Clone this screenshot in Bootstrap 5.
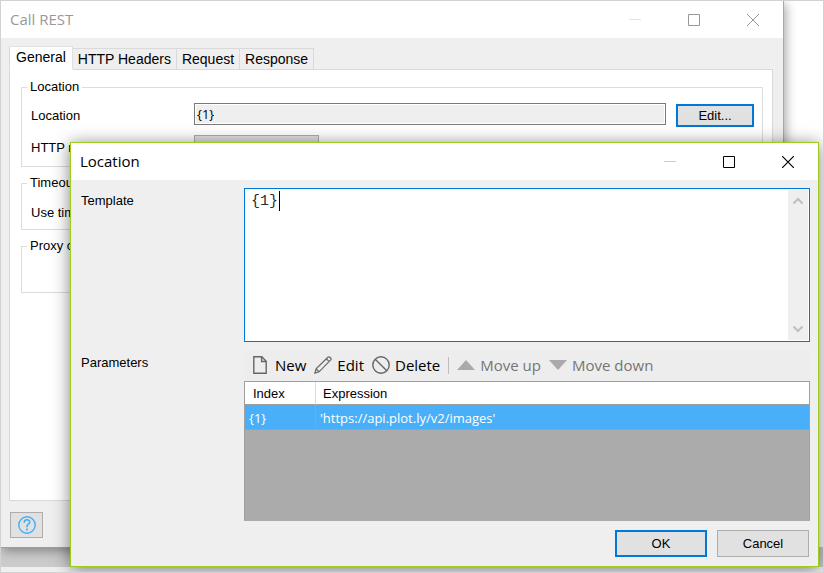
<!DOCTYPE html>
<html lang="en">
<head>
<meta charset="utf-8">
<meta name="viewport" content="width=device-width, initial-scale=1">
<title>Call REST</title>
<link href="https://cdn.jsdelivr.net/npm/bootstrap@5.3.0/dist/css/bootstrap.min.css" rel="stylesheet">
<style>
body { font: 13px/16px "Liberation Sans", Arial, sans-serif; color: #000; background: #fff; }
.desk { min-height: 100vh; border: 1px solid #d2d2d2; background: linear-gradient(to top, #efefef 5px, #cbcbcb 5px, #cbcbcb 25px, #fff 25px); }
.win { background: #efefef; }
.win-rest { inset: 0 39px 24px 0; border-right: 1px solid #a8a8a8; border-bottom: 1px solid #9d9d9d; box-shadow: 2px 3px 10px rgba(0,0,0,.35); }
.win-loc { inset: 141px 4px 5px 69px; border: 1px solid #9acd1e; box-shadow: 0 2px 16px rgba(0,0,0,.5); }
.titlebar { height: 37px; background: #fff; font: 15px/20px "Open Sans", "Noto Sans", sans-serif; padding: 0 24px 2px 9px; }
.titlebar h1 { font: inherit; margin: 0; }
.inactive { color: #999; }
.titlebar button { color: inherit; width: 12px; height: 12px; margin-top: 2px; }
.sys { gap: 47px; }
.plain { border: 0; background: none; padding: 0; }
svg { display: block; }
.rest-body { padding: 8px 10px 9px 8px; }
.win-tabs { font-size: 14px; border: 0; margin-bottom: -1px; position: relative; }
.win-tabs .nav-link { color: #000; border: 1px solid #d9d9d9; border-left: 0; border-radius: 0; margin: 0; padding: 2px 5px; line-height: 16px; background: #efefef; height: 22px; }
.win-tabs .nav-link.active { color: #000; background: #fff; border-left: 1px solid #d9d9d9; border-bottom-color: #fff; height: 24px; padding: 2px 6px 4px; }
.pane { background: #fff; border: 1px solid #d9d9d9; padding: 9px 9px 0 11px; margin-bottom: 11px; }
.group { border: 1px solid #dcdcdc; padding: 0 8px 0 9px; margin-bottom: 8px; }
.group legend { float: none; width: auto; font: inherit; margin: 0 0 0 -4px; padding: 0 3px; }
.group-tall { height: 88px; }
.group-short { height: 55px; }
.label-col { flex: 0 0 163px; padding-top: 5px; }
.use-timeout { padding-top: 14px; }
.field { height: 22px; border: 1px solid #7a7a7a; background: #efefef; padding: 0 2px; font: 13px/16px "Open Sans", "Noto Sans", sans-serif; box-shadow: inset 0 0 0 1px #fff; min-width: 0; }
.combo { width: 125px; height: 22px; border: 1px solid #adadad; background: #e1e1e1; font: inherit; }
.btn-win { border: 1px solid #adadad; border-radius: 0; background: #e1e1e1; color: #000; font: 13px/16px "Liberation Sans", Arial, sans-serif; padding: 0; height: 27px; width: 92px; }
.btn-focus { border: 2px solid #0078d7; }
.btn-edit { width: 78px; height: 23px; margin: 1px 0 0 10px; }
.btn-help { width: 33px; height: 26px; margin-left: 1px; color: #45adf5; }
.loc-body { padding: 8px 8px 9px 10px; }
.editor { height: 154px; border: 1px solid #0078d7; background: #fff; padding: 1px; }
.editor textarea { border: 0; outline: 0; resize: none; padding: 2px 5px; font: 15px/20px "Liberation Mono", monospace; color: #2b2b2b; overflow: hidden; }
.caret { left: 34px; top: 2px; width: 1px; height: 20px; background: #000; }
.scroll { width: 20px; background: #efefef; padding: 7px 0; }
.tools { height: 31px; background: #ededed; font: 15px/20px "Open Sans", "Noto Sans", sans-serif; padding: 0 0 1px 9px; }
.tool { gap: 5px; }
.off { color: #757575; }
.sep { width: 1px; height: 17px; background: #bdbdbd; }
.grid-area { background: #ababab; border-top: 1px solid #a0a0a0; border-left: 1px solid #a0a0a0; border-right: 1px solid #a0a0a0; }
.params { border-collapse: separate; border-spacing: 0; width: 100%; table-layout: fixed; }
.params th { height: 23px; font-weight: 400; background: #fff; padding: 1px 7px 0 8px; border-bottom: 1px solid #a0a0a0; }
.params th + th { border-left: 1px solid #dcdcdc; padding-left: 7px; }
.params td { height: 25px; background: #48aff8; color: #fff; padding: 2px 4px 0; border-bottom: 1px solid #a0a0a0; font: 13px/16px "Open Sans", "Noto Sans", sans-serif; }
.params td + td { border-left: 1px solid #9aa0a4; }
.params .col-index { width: 70px; }
.actions { gap: 10px; padding: 9px 1px 0 0; }
</style>
<script src="https://cdn.jsdelivr.net/npm/bootstrap@5.3.0/dist/js/bootstrap.bundle.min.js"></script>
</head>
<body>
<div class="desk position-relative overflow-hidden">

  <section class="win win-rest position-absolute d-flex flex-column" aria-label="Call REST">
    <header class="titlebar inactive d-flex align-items-center justify-content-between">
      <h1>Call REST</h1>
      <div class="sys d-flex">
        <button type="button" class="plain" aria-label="Minimize" disabled><svg width="12" height="12"><path d="M0 5.5h12" stroke="#e2e2e2"/></svg></button>
        <button type="button" class="plain" aria-label="Maximize"><svg width="12" height="12"><path d="M.5.5h11v11H.5z" fill="none" stroke="currentColor"/></svg></button>
        <button type="button" class="plain" aria-label="Close"><svg width="12" height="12"><path d="M0 0l12 12M12 0L0 12" stroke="currentColor"/></svg></button>
      </div>
    </header>
    <div class="rest-body flex-fill d-flex flex-column">
      <div class="nav nav-tabs win-tabs align-items-end" role="tablist">
        <button type="button" class="nav-link active" role="tab" aria-selected="true">General</button>
        <button type="button" class="nav-link" role="tab">HTTP Headers</button>
        <button type="button" class="nav-link" role="tab">Request</button>
        <button type="button" class="nav-link" role="tab">Response</button>
      </div>
      <div class="pane flex-fill" role="tabpanel">
        <fieldset class="group group-tall">
          <legend>Location</legend>
          <div class="d-flex align-items-start pt-2">
            <label class="label-col" for="location">Location</label>
            <input class="field flex-fill rounded-0" id="location" value="{1}" readonly>
            <button type="button" class="btn btn-win btn-focus btn-edit">Edit...</button>
          </div>
          <div class="d-flex align-items-start pt-2">
            <label class="label-col" for="method">HTTP method</label>
            <select class="combo" id="method" disabled><option></option></select>
          </div>
        </fieldset>
        <fieldset class="group group-short">
          <legend>Timeout</legend>
          <label class="use-timeout" for="timeout">Use timeout</label>
          <input type="checkbox" id="timeout">
        </fieldset>
        <fieldset class="group group-short">
          <legend>Proxy configuration</legend>
        </fieldset>
      </div>
      <button type="button" class="btn btn-win btn-help d-flex align-items-center justify-content-center" aria-label="Help">
        <svg width="18" height="18" viewBox="0 0 18 18" fill="none" stroke="currentColor" stroke-width="1.4"><circle cx="9" cy="9" r="8.2"/><path d="M6.3 6.8V6a2.7 2.4 0 0 1 5.4.3c0 1.8-2.7 2-2.7 4.1v.9" stroke-width="1.6"/><path d="M8.1 13.5h1.8" stroke-width="1.9"/></svg>
      </button>
    </div>
  </section>

  <section class="win win-loc position-absolute d-flex flex-column" role="dialog" aria-label="Location">
    <header class="titlebar d-flex align-items-center justify-content-between">
      <h1>Location</h1>
      <div class="sys d-flex">
        <button type="button" class="plain" aria-label="Minimize" disabled><svg width="12" height="12"><path d="M0 5.5h12" stroke="#ccc"/></svg></button>
        <button type="button" class="plain" aria-label="Maximize"><svg width="12" height="12"><path d="M.5.5h11v11H.5z" fill="none" stroke="#000"/></svg></button>
        <button type="button" class="plain" aria-label="Close"><svg width="12" height="12"><path d="M0 0l12 12M12 0L0 12" stroke="#000" stroke-width="1.2"/></svg></button>
      </div>
    </header>
    <div class="loc-body flex-fill d-flex flex-column">
      <div class="d-flex">
        <label class="label-col" for="template">Template</label>
        <div class="editor flex-fill d-flex position-relative">
          <textarea class="flex-fill" id="template" spellcheck="false">{1}</textarea>
          <span class="caret position-absolute"></span>
          <div class="scroll d-flex flex-column justify-content-between align-items-center" aria-hidden="true">
            <svg width="10" height="8" fill="none" stroke="#bfbfbf" stroke-width="2"><path d="M.5 6.500L5 2l4.500 4.500"/></svg>
            <svg width="10" height="8" fill="none" stroke="#bfbfbf" stroke-width="2"><path d="M.5 1.500L5 6l4.500-4.500"/></svg>
          </div>
        </div>
      </div>
      <div class="d-flex flex-fill pt-2">
        <div class="label-col" id="params-label">Parameters</div>
        <div class="flex-fill d-flex flex-column">
          <div class="tools d-flex align-items-center gap-2" role="toolbar" aria-label="Parameters">
            <button type="button" class="plain d-flex align-items-center gap-2"><svg width="14" height="18" fill="none" stroke="#666" stroke-width="1.4"><path d="M.8.8h8l4.400 4.500v11.900H.8zM8.600.8v4.700h4.600"/></svg>New</button>
            <button type="button" class="plain tool d-flex align-items-center"><svg width="18" height="18" fill="none" stroke="#666" stroke-width="1.200"><path d="M.9 17.100l1.200-4.200L13.900 1.200c1.300-1.300 4.100 1.200 2.800 2.700L5.100 15.800zM2.100 12.900l3 2.900M12.300 2.800l2.900 2.800"/></svg>Edit</button>
            <button type="button" class="plain tool d-flex align-items-center"><svg width="18" height="18" fill="none" stroke="#666" stroke-width="1.400"><circle cx="9" cy="9" r="8.200"/><path d="M3.200 3.200l11.600 11.600"/></svg>Delete</button>
            <span class="sep"></span>
            <button type="button" class="plain tool off d-flex align-items-center"><svg width="18" height="10"><path d="M0 10L9 0l9 10z" fill="#aaa"/></svg>Move up</button>
            <button type="button" class="plain tool off d-flex align-items-center"><svg width="18" height="10"><path d="M0 0h18L9 10z" fill="#aaa"/></svg>Move down</button>
          </div>
          <div class="grid-area flex-fill">
            <table class="params" aria-labelledby="params-label">
              <thead><tr><th class="col-index" scope="col">Index</th><th scope="col">Expression</th></tr></thead>
              <tbody><tr><td>{1}</td><td>'https://api.plot.ly/v2/images'</td></tr></tbody>
            </table>
          </div>
        </div>
      </div>
      <div class="actions d-flex justify-content-end">
        <button type="button" class="btn btn-win btn-focus">OK</button>
        <button type="button" class="btn btn-win">Cancel</button>
      </div>
    </div>
  </section>
</div>
</body>
</html>
